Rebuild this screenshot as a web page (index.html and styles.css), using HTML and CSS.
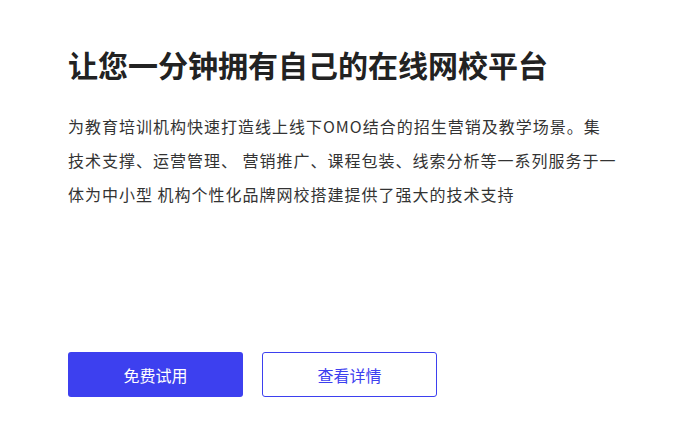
FILE: index.html
```html
<!DOCTYPE html>
<html lang="zh-CN">

<head>
    <meta charset="UTF-8">
    <meta name="viewport" content="width=device-width, initial-scale=1.0">
    <title>在线网校平台</title>
    <link rel="stylesheet" href="styles.css">
</head>

<body>
    <div class="main">
        <h1 class="title">让您一分钟拥有自己的在线网校平台</h1>
        <p class="desc">为教育培训机构快速打造线上线下OMO结合的招生营销及教学场景。集<br>技术支撑、运营管理、 营销推广、课程包装、线索分析等一系列服务于一<br>体为中小型 机构个性化品牌网校搭建提供了强大的技术支持</p>
        <div class="btns">
            <button class="btn try">免费试用</button>
            <button class="btn detail">查看详情</button>
        </div>
    </div>
</body>

</html>
```

FILE: styles.css
```css
html,
body {
    width: 100%;
    height: 100%;
    background-color: #fff;
    color: #333;
    margin: 0;
    padding: 0;
    font-family: "Noto Sans CJK SC", "Noto Sans", Arial, sans-serif;
}

.main {
    padding: 44px 0 0 68px;
    box-sizing: border-box;
}

.title {
    margin: 0;
    font-size: 30px;
    line-height: 40px;
    font-weight: bold;
    color: #222;
}

.desc {
    margin: 25px 0 0;
    width: 560px;
    font-size: 16px;
    line-height: 34px;
    letter-spacing: 1px;
    color: #333;
}

.btns {
    display: flex;
    gap: 19px;
    margin-top: 141px;
}

.btn {
    width: 175px;
    height: 45px;
    border-radius: 3px;
    font-size: 16px;
    font-family: inherit;
    outline: none;
    cursor: pointer;
    box-sizing: border-box;
}

.btn.try {
    background-color: #3d40ef;
    border: none;
    color: #fff;
}

.btn.detail {
    background-color: #fff;
    border: solid 1px #3d40ef;
    color: #3d40ef;
}
```
